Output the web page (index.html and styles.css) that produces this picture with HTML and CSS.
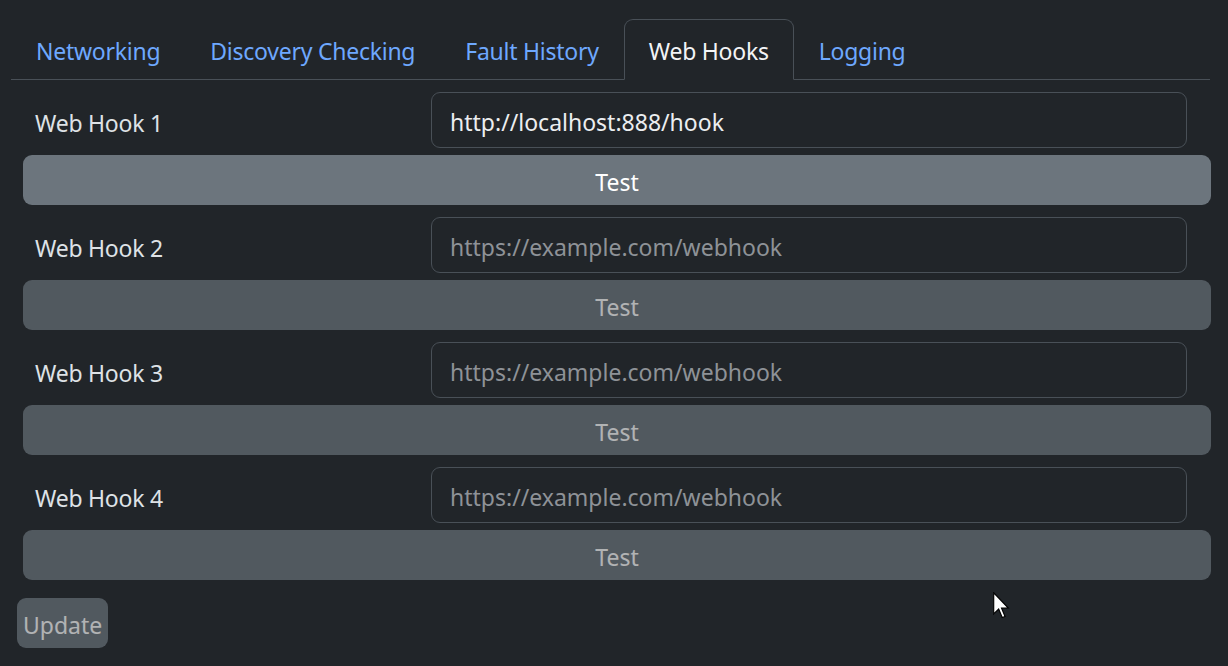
FILE: index.html
```html
<!DOCTYPE html>
<html lang="en">
<head>
  <meta charset="UTF-8">
  <meta name="viewport" content="width=device-width, initial-scale=1.0">
  <title>Settings</title>
  <link rel="stylesheet" href="styles.css">
</head>
<body>
  <ul class="nav-tabs">
    <li><a class="nav-link" href="#">Networking</a></li>
    <li><a class="nav-link" href="#">Discovery Checking</a></li>
    <li><a class="nav-link" href="#">Fault History</a></li>
    <li><a class="nav-link active" href="#">Web Hooks</a></li>
    <li><a class="nav-link" href="#">Logging</a></li>
  </ul>

  <form class="hooks">
    <div class="hook">
      <div class="hook-row">
        <label for="hook-1">Web Hook 1</label>
        <input type="text" id="hook-1" value="http://localhost:888/hook" placeholder="https://example.com/webhook">
      </div>
      <button type="button" class="btn">Test</button>
    </div>
    <div class="hook">
      <div class="hook-row">
        <label for="hook-2">Web Hook 2</label>
        <input type="text" id="hook-2" placeholder="https://example.com/webhook">
      </div>
      <button type="button" class="btn" disabled>Test</button>
    </div>
    <div class="hook">
      <div class="hook-row">
        <label for="hook-3">Web Hook 3</label>
        <input type="text" id="hook-3" placeholder="https://example.com/webhook">
      </div>
      <button type="button" class="btn" disabled>Test</button>
    </div>
    <div class="hook">
      <div class="hook-row">
        <label for="hook-4">Web Hook 4</label>
        <input type="text" id="hook-4" placeholder="https://example.com/webhook">
      </div>
      <button type="button" class="btn" disabled>Test</button>
    </div>
  </form>

  <button type="button" class="btn btn-update" disabled>Update</button>

  <!-- pointer -->
  <svg class="cursor" width="17" height="27" viewBox="0 0 12 19">
    <path d="M0.5 0.5 V15.5 L4 12 L6.5 18 L8.5 17.2 L6 11.3 H10.8 Z" fill="#fff" stroke="#000" stroke-width="0.8" stroke-linejoin="miter"/>
  </svg>
</body>
</html>
```

FILE: styles.css
```css
body {
  margin: 0;
  padding: 0;
  background: #212529;
  color: #dee2e6;
  font-family: "Noto Sans", "Open Sans", sans-serif;
  font-size: 23px;
  letter-spacing: -0.25px;
  line-height: 36px;
  height: 666px;
  position: relative;
  overflow: hidden;
}

/* tabs */
.nav-tabs {
  display: flex;
  list-style: none;
  margin: 19px 18px 0 11px;
  padding: 0;
  border-bottom: 1px solid #495057;
}
.nav-link {
  display: block;
  padding: 13px 24px 10px;
  margin-bottom: -1px;
  border: 1px solid transparent;
  border-radius: 9px 9px 0 0;
  color: #6ea8fe;
  text-decoration: none;
}
.nav-link.active {
  color: #f3f4f6;
  background: #212529;
  border-color: #495057 #495057 #212529;
}

/* hook rows */
.hooks {
  margin: 12px 17px 0 23px;
}
.hook {
  margin-bottom: 12px;
}
.hook-row {
  display: flex;
  align-items: center;
  padding-right: 24px;
}
.hook-row label {
  width: 396px;
  padding-left: 12px;
  padding-top: 5px;
  flex-shrink: 0;
}
.hook-row input {
  flex: 1;
  height: 56px;
  box-sizing: border-box;
  padding: 3px 18px 0;
  font: inherit;
  color: #eceef0;
  background: #212529;
  border: 1px solid #495057;
  border-radius: 9px;
  outline: none;
}
.hook-row input::placeholder {
  color: #8e9297;
}

.btn {
  display: block;
  width: 100%;
  height: 50px;
  margin-top: 7px;
  padding: 3px 0 0;
  font: inherit;
  color: #fff;
  background: #6c757d;
  border: none;
  border-radius: 9px;
}
.btn:disabled {
  opacity: 0.65;
}

.btn-update {
  width: auto;
  margin: 18px 0 0 17px;
  padding: 3px 6px 0;
}

.cursor {
  position: absolute;
  left: 993px;
  top: 592px;
}
```
